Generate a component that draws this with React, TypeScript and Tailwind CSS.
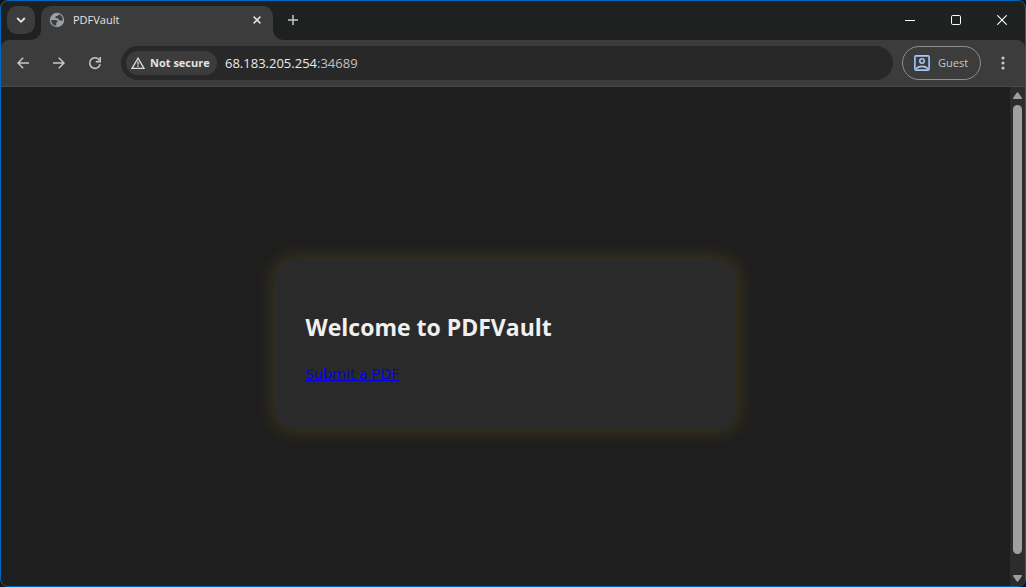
import type { ReactNode } from "react";

function IconButton({ label, className, children }: { label: string; className: string; children: ReactNode }) {
  return (
    <button type="button" aria-label={label} className={`flex shrink-0 items-center justify-center ${className}`}>
      {children}
    </button>
  );
}

function TabStrip() {
  return (
    <header className="flex h-[39px] shrink-0 items-start pl-1.5 pt-[5px]">
      <IconButton label="Search tabs" className="size-7 rounded-[10px] bg-[#3c3c3c]">
        <svg width="10" height="8" viewBox="0 0 10 8" fill="none" stroke="#e8e8e8" strokeWidth="1.8">
          <path d="M1.2 2 5 5.8 8.8 2" />
        </svg>
      </IconButton>
      <div className="relative ml-1.5 flex h-[34px] w-[232px] items-center rounded-t-[10px] bg-[#3c3c3c] pb-1.5 pl-2 pr-2.5">
        <svg className="absolute -left-2.5 bottom-0" width="10" height="10" viewBox="0 0 10 10" fill="#3c3c3c">
          <path d="M10 0v10H0A10 10 0 0 0 10 0Z" />
        </svg>
        <svg className="absolute -right-2.5 bottom-0" width="10" height="10" viewBox="0 0 10 10" fill="#3c3c3c">
          <path d="M0 0v10h10A10 10 0 0 1 0 0Z" />
        </svg>
        <svg width="16" height="16" viewBox="0 0 16 16">
          <circle cx="8" cy="8" r="7.2" fill="#9aa0a6" />
          <g fill="#3c3c3c">
            <path d="M2.200 8h4c1.700 0 2.700.9 2.700 2.200H7.300v1.500c0 .6-.5 1.100-1.100 1.100h1.300v1C4.200 13.600 2 10.900 2.200 8Z" />
            <path d="M9.500 2.300c.1 1-.4 1.500-1.200 1.700-.9.200-1.700.3-1.900 1.100-.2.900.5 1.200 1.400 1.200 1 0 1.600.2 1.900 1.100.3.900.9 1.300 1.800 1.200.9-.1 1.600-.1 2.200.2C14.200 5.600 12.200 2.900 9.500 2.300Z" />
          </g>
        </svg>
        <span className="ml-2 flex-1 text-[11px] leading-4 text-[#e3e3e3]">PDFVault</span>
        <IconButton label="Close tab" className="size-3">
          <svg width="8" height="8" viewBox="0 0 8 8" stroke="#e3e3e3" strokeWidth="1.5">
            <path d="m.6.6 6.800 6.800M7.400.6.600 7.400" />
          </svg>
        </IconButton>
      </div>
      <IconButton label="New tab" className="ml-1.5 size-7">
        <svg width="10" height="10" viewBox="0 0 10 10" stroke="#c7c7c7" strokeWidth="1.5">
          <path d="M5 0v10M0 5h10" />
        </svg>
      </IconButton>
      <div className="ml-auto flex">
        <IconButton label="Minimize" className="h-7 w-[46px]">
          <svg width="10" height="10" viewBox="0 0 10 10" stroke="#fff">
            <path d="M0 5.500h10" />
          </svg>
        </IconButton>
        <IconButton label="Maximize" className="h-7 w-[46px]">
          <svg width="10" height="10" viewBox="0 0 10 10" fill="none" stroke="#fff">
            <rect x=".5" y=".5" width="9" height="9" rx="1.200" />
          </svg>
        </IconButton>
        <IconButton label="Close" className="h-7 w-[46px]">
          <svg width="10" height="10" viewBox="0 0 10 10" stroke="#fff" strokeWidth="1.100">
            <path d="m.3.3 9.400 9.400M9.700.3.300 9.700" />
          </svg>
        </IconButton>
      </div>
    </header>
  );
}

function Toolbar() {
  return (
    <nav className="flex h-[47px] shrink-0 items-center rounded-t-lg border-b border-[#4a4a4a] bg-[#3c3c3c] pl-2 pr-2">
      <IconButton label="Back" className="size-7">
        <svg width="12" height="12" viewBox="0 0 12 12" fill="none" stroke="#c7c7c7" strokeWidth="1.500">
          <path d="M12 6H1.200M6.200.8 1 6l5.200 5.200" />
        </svg>
      </IconButton>
      <IconButton label="Forward" className="ml-2 size-7">
        <svg width="12" height="12" viewBox="0 0 12 12" fill="none" stroke="#c7c7c7" strokeWidth="1.500">
          <path d="M0 6h10.800M5.800.8 11 6l-5.200 5.200" />
        </svg>
      </IconButton>
      <IconButton label="Reload" className="ml-2 size-7">
        <svg width="14" height="14" viewBox="0 0 14 14" fill="none" stroke="#c7c7c7" strokeWidth="1.600">
          <path d="M12.200 8.200A5.300 5.300 0 1 1 11.400 4.100" />
          <path d="M12.200 1v4.600H7.800" />
        </svg>
      </IconButton>
      <div className="ml-3 flex h-[34px] min-w-0 flex-1 items-center rounded-full bg-[#282828] pl-[5px]">
        <button
          type="button"
          className="flex h-6 w-[91px] shrink-0 items-center gap-[5px] rounded-full bg-[#3c3c3c] pl-[5px] text-[11px] font-bold leading-4 text-[#e3e3e3]"
        >
          <svg className="shrink-0" width="14" height="12" viewBox="0 0 14 12" fill="none" stroke="#dcdcdc" strokeWidth="1.300">
            <path d="M7 1.200 13 11.300H1Z" />
            <path d="M7 4.500v3.200M7 8.600v1.300" />
          </svg>
          <span className="whitespace-nowrap">Not secure</span>
        </button>
        <div className="relative ml-2 h-6 min-w-0 flex-1 text-[13px] leading-6">
          <input
            aria-label="Address"
            defaultValue="68.183.205.254:34689"
            className="h-6 w-full bg-transparent text-transparent caret-white outline-none"
          />
          <span aria-hidden="true" className="pointer-events-none absolute inset-0 text-[#e8eaed]">
            68.183.205.254<span className="text-[#c0c0c0]">:34689</span>
          </span>
        </div>
      </div>
      <button
        type="button"
        className="ml-[9px] flex h-[34px] w-[79px] shrink-0 items-center gap-2 rounded-full border border-[#8e8e8e] pl-[11px] text-[11px] text-[#c7c7c7]"
      >
        <svg className="shrink-0" width="16" height="16" viewBox="0 0 16 16" fill="none" stroke="#a8c7fa" strokeWidth="1.600">
          <rect x=".9" y=".9" width="14.200" height="14.200" rx="1" />
          <circle cx="8" cy="6" r="2.200" />
          <path d="M2 13.600c3.500-3 8.500-3 12 0" />
        </svg>
        Guest
      </button>
      <IconButton label="Menu" className="ml-2 size-7">
        <svg width="4" height="14" viewBox="0 0 4 14" fill="#c7c7c7">
          <circle cx="2" cy="2" r="1.600" />
          <circle cx="2" cy="7" r="1.600" />
          <circle cx="2" cy="12" r="1.600" />
        </svg>
      </IconButton>
    </nav>
  );
}

function Scrollbar() {
  return (
    <div className="flex w-[15px] shrink-0 flex-col items-center bg-[#2c2c2c] pb-1 pt-[5px]">
      <svg width="9" height="8" viewBox="0 0 9 8" fill="#9f9f9f">
        <path d="M3.500.9a1.200 1.200 0 0 1 2 0L8.800 5.800q.5 1.200-.7 1.200H.9Q-.3 7 .2 5.800Z" />
      </svg>
      <div className="mb-5 mt-[5px] w-[9px] flex-1 rounded-full bg-[#9f9f9f]" />
      <svg width="9" height="8" viewBox="0 0 9 8" fill="#9f9f9f">
        <path d="M3.500 7.100a1.200 1.200 0 0 0 2 0L8.800 2.200Q9.300 1 8.100 1H.9Q-.3 1 .2 2.200Z" />
      </svg>
    </div>
  );
}

export default function App() {
  return (
    <div className="h-screen bg-[#141414] font-['Open_Sans','Noto_Sans',sans-serif]">
      <div className="flex h-full flex-col overflow-hidden rounded-lg border border-[#0067c0] bg-[#1f2120]">
        <TabStrip />
        <Toolbar />
        <div className="flex min-h-0 flex-1 bg-[#1e1e1e]">
          <main className="flex min-w-0 flex-1 items-center justify-center pt-4">
            <section className="w-[460px] rounded-2xl bg-[#2a2a2a] px-[30px] pb-[45px] pt-[51px] shadow-[0_0_20px_rgba(255,205,0,0.18)]">
              <h2 className="mb-5 text-[23px] font-bold leading-8 text-[#f0f0f0]">Welcome to PDFVault</h2>
              <p className="text-[15px] leading-[21px]">
                <a href="#submit" className="text-[#0000ee] underline">
                  Submit a PDF
                </a>
              </p>
            </section>
          </main>
          <Scrollbar />
        </div>
      </div>
    </div>
  );
}
